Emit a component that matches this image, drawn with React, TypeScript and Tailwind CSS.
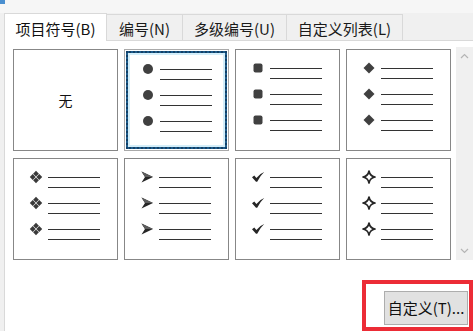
import React from 'react';

type Kind = 'none' | 'circle' | 'square' | 'diamond' | 'quad' | 'arrow' | 'check' | 'star';

const Bullet: React.FC<{ kind: Kind }> = ({ kind }) => {
  // every bullet is drawn in a 14x14 box, centred on the first text line
  switch (kind) {
    case 'circle':
      return (
        <svg width="14" height="14" viewBox="0 0 14 14">
          <circle cx="7" cy="7" r="5" fill="#404040" />
        </svg>
      );
    case 'square':
      return (
        <svg width="14" height="14" viewBox="0 0 14 14">
          <rect x="2.5" y="2.5" width="9" height="9" rx="2" fill="#404040" />
        </svg>
      );
    case 'diamond':
      return (
        <svg width="14" height="14" viewBox="0 0 14 14">
          <path d="M7 1.5 L12.5 7 L7 12.5 L1.5 7 Z" fill="#404040" />
        </svg>
      );
    case 'quad':
      return (
        <svg width="14" height="14" viewBox="0 0 14 14">
          <path d="M7 0.8 L9.9 3.7 L7 6.6 L4.1 3.7 Z" fill="#3a3a3a" />
          <path d="M7 7.4 L9.9 10.3 L7 13.2 L4.1 10.3 Z" fill="#3a3a3a" />
          <path d="M3.7 4.1 L6.6 7 L3.7 9.9 L0.8 7 Z" fill="#3a3a3a" />
          <path d="M10.3 4.1 L13.2 7 L10.3 9.9 L7.4 7 Z" fill="#3a3a3a" />
        </svg>
      );
    case 'arrow':
      return (
        <svg width="14" height="14" viewBox="0 0 14 14">
          <path d="M1.5 1.5 L13 7 L1.5 12.5 L5 7 Z" fill="#262626" />
          <path d="M1.5 1.5 L13 7 L5 7 Z" fill="#5c5c5c" />
        </svg>
      );
    case 'check':
      return (
        <svg width="14" height="14" viewBox="0 0 14 14">
          <path d="M1 7.2 L3.3 5.6 L5.4 8 Q8.4 3.8 13.2 2 Q9.4 5.4 6.2 11.8 L5 11.8 Z" fill="#262626" />
        </svg>
      );
    case 'star':
      return (
        <svg width="14" height="14" viewBox="0 0 14 14">
          <path
            d="M7 1 Q7.9 6.1 13 7 Q7.9 7.9 7 13 Q6.1 7.9 1 7 Q6.1 6.1 7 1 Z"
            fill="none"
            stroke="#262626"
            strokeWidth="1.7"
            strokeLinejoin="round"
          />
        </svg>
      );
    default:
      return null;
  }
};

const BulletList: React.FC<{ kind: Kind }> = ({ kind }) => (
  <div className="flex flex-col gap-[15px]">
    {[0, 1, 2].map((i) => (
      <div key={i} className="flex items-start">
        <div className="w-[14px] h-[14px] -mt-[7px]">
          <Bullet kind={kind} />
        </div>
        <div className="ml-[5px] flex flex-col gap-[9px]">
          <div className="w-[52px] h-px bg-[#333]" />
          <div className="w-[52px] h-px bg-[#333]" />
        </div>
      </div>
    ))}
  </div>
);

const Cell: React.FC<{ kind: Kind; selected?: boolean }> = ({ kind, selected }) => {
  if (kind === 'none') {
    return (
      <div className="w-[105px] h-[102px] border border-[#878787] bg-white flex items-center justify-center text-[14px] text-[#111]">
        无
      </div>
    );
  }
  if (selected) {
    return (
      <div className="w-[105px] h-[102px] border border-[#a9a9a9] bg-white p-px">
        <div className="h-full border-2 border-dotted border-[#123f66] bg-[#1d5c8c]">
          <div className="h-full border-2 border-[#d4eef9] bg-white pt-[14px] pl-[11px]">
            <BulletList kind={kind} />
          </div>
        </div>
      </div>
    );
  }
  return (
    <div className="w-[105px] h-[102px] border border-[#878787] bg-white pt-[18px] pl-[15px]">
      <BulletList kind={kind} />
    </div>
  );
};

const tabs = [
  { label: '项目符号(B)', w: 'w-[103px]', active: true },
  { label: '编号(N)', w: 'w-[76px]', active: false },
  { label: '多级编号(U)', w: 'w-[104px]', active: false },
  { label: '自定义列表(L)', w: 'w-[116px]', active: false },
];

const App: React.FC = () => {
  return (
    <div
      className="w-[473px] h-[331px] bg-[#f0f0f0] flex flex-col overflow-hidden text-[#111]"
      style={{ fontFamily: '"Noto Sans CJK SC", "Noto Sans", sans-serif' }}
    >
      {/* bottom edge of the title bar */}
      <div className="h-[13px] bg-[#f6f6f6] flex">
        <div className="w-[5px] h-[4px] bg-[#4a8fd0]" />
      </div>

      {/* tabs */}
      <div className="h-[27px] flex items-end pl-[4px]">
        {tabs.map((t) =>
          t.active ? (
            <div
              key={t.label}
              className={`${t.w} h-[28px] -mb-px relative z-10 bg-white border border-b-0 border-[#d9d9d9] flex items-center justify-center pt-[3px] text-[15px]`}
            >
              {t.label}
            </div>
          ) : (
            <div
              key={t.label}
              className={`${t.w} h-[26px] bg-[#f0f0f0] border border-l-0 border-b-0 border-[#d9d9d9] flex items-center justify-center pt-[3px] text-[15px] text-[#1a1a1a]`}
            >
              {t.label}
            </div>
          )
        )}
      </div>

      {/* tab panel */}
      <div className="flex-1 ml-[4px] bg-white border-l border-t border-[#d9d9d9] flex flex-col">
        <div className="flex pt-[6px] h-[219px]">
          <div className="pl-[8px] pt-[2px] grid grid-cols-[105px_105px_105px_105px] gap-x-[6px] gap-y-[7px]">
            <Cell kind="none" />
            <Cell kind="circle" selected />
            <Cell kind="square" />
            <Cell kind="diamond" />
            <Cell kind="quad" />
            <Cell kind="arrow" />
            <Cell kind="check" />
            <Cell kind="star" />
          </div>
          {/* scroll bar */}
          <div className="ml-[5px] w-[18px] h-[213px] bg-[#f0f0f0] flex flex-col items-center justify-between py-[6px]">
            <svg width="9" height="6" viewBox="0 0 9 6">
              <path d="M1 5 L4.5 1.5 L8 5" fill="none" stroke="#b5b5b5" strokeWidth="1.2" />
            </svg>
            <svg width="9" height="6" viewBox="0 0 9 6">
              <path d="M1 1 L4.5 4.5 L8 1" fill="none" stroke="#b5b5b5" strokeWidth="1.2" />
            </svg>
          </div>
        </div>

        {/* highlighted button */}
        <div className="mt-[20px] flex justify-end">
          <div className="w-[111px] h-[51px] border-4 border-[#ec2c36] pt-[7px] pl-[18px]">
            <button className="w-[84px] h-[34px] bg-[#e1e1e1] border border-[#adadad] text-[15px] text-[#111] flex items-center justify-center whitespace-nowrap">
              自定义(T)...
            </button>
          </div>
        </div>
      </div>
    </div>
  );
};

export default App;
